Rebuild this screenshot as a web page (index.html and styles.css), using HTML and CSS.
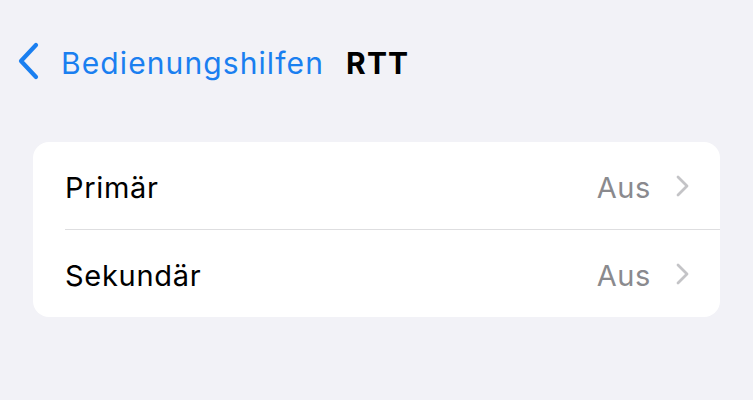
FILE: index.html
```html
<!DOCTYPE html>
<html lang="de">
<head>
<meta charset="utf-8">
<link rel="stylesheet" href="styles.css">
</head>
<body>
<div class="nav">
  <a class="back">
    <svg class="back-icon" width="24" height="38" viewBox="0 0 24 38"><path d="M20 3 L5 19 L20 35" fill="none" stroke="#1a7ff0" stroke-width="4.2" stroke-linecap="round" stroke-linejoin="round"/></svg>
    <span class="back-label">Bedienungshilfen</span>
  </a>
  <span class="title">RTT</span>
</div>
<div class="card">
  <div class="row">
    <span class="label">Primär</span>
    <span class="value">Aus</span>
    <svg class="chev" width="14" height="22" viewBox="0 0 14 22"><path d="M3 2 L12 11 L3 20" fill="none" stroke="#c4c4c7" stroke-width="2.8" stroke-linecap="round" stroke-linejoin="round"/></svg>
  </div>
  <div class="row">
    <span class="label">Sekundär</span>
    <span class="value">Aus</span>
    <svg class="chev" width="14" height="22" viewBox="0 0 14 22"><path d="M3 2 L12 11 L3 20" fill="none" stroke="#c4c4c7" stroke-width="2.8" stroke-linecap="round" stroke-linejoin="round"/></svg>
  </div>
</div>
</body>
</html>
```
FILE: styles.css
```css
html, body {
  margin: 0;
  padding: 0;
  background: #f2f2f7;
  font-family: Inter, "Liberation Sans", sans-serif;
  -webkit-font-smoothing: antialiased;
}
.nav {
  display: flex;
  align-items: center;
  height: 60px;
  padding: 31px 0 0 16px;
}
.back {
  display: flex;
  align-items: center;
  color: #1a7ff0;
}
.back-icon {
  display: block;
  margin-right: 21px;
}
.back-label {
  font-size: 30px;
  letter-spacing: 1.1px;
  padding-top: 4px;
}
.title {
  font-size: 30px;
  font-weight: 700;
  letter-spacing: 1.2px;
  margin-left: 22px;
  color: #000;
  padding-top: 4px;
}
.card {
  margin: 51px 33px 0 33px;
  background: #fff;
  border-radius: 16px;
  overflow: hidden;
}
.row {
  display: flex;
  align-items: center;
  height: 87px;
  margin-left: 32px;
  padding-right: 31px;
}
.row + .row {
  border-top: 1.5px solid #dedee0;
}
.label, .value {
  padding-top: 4px;
}
.label {
  flex: 1;
  font-size: 29px;
  letter-spacing: 0.7px;
  color: #000;
}
.value {
  font-size: 29px;
  letter-spacing: 0.6px;
  color: #8a8a8e;
  margin-right: 24px;
}
.chev {
  display: block;
}
```
